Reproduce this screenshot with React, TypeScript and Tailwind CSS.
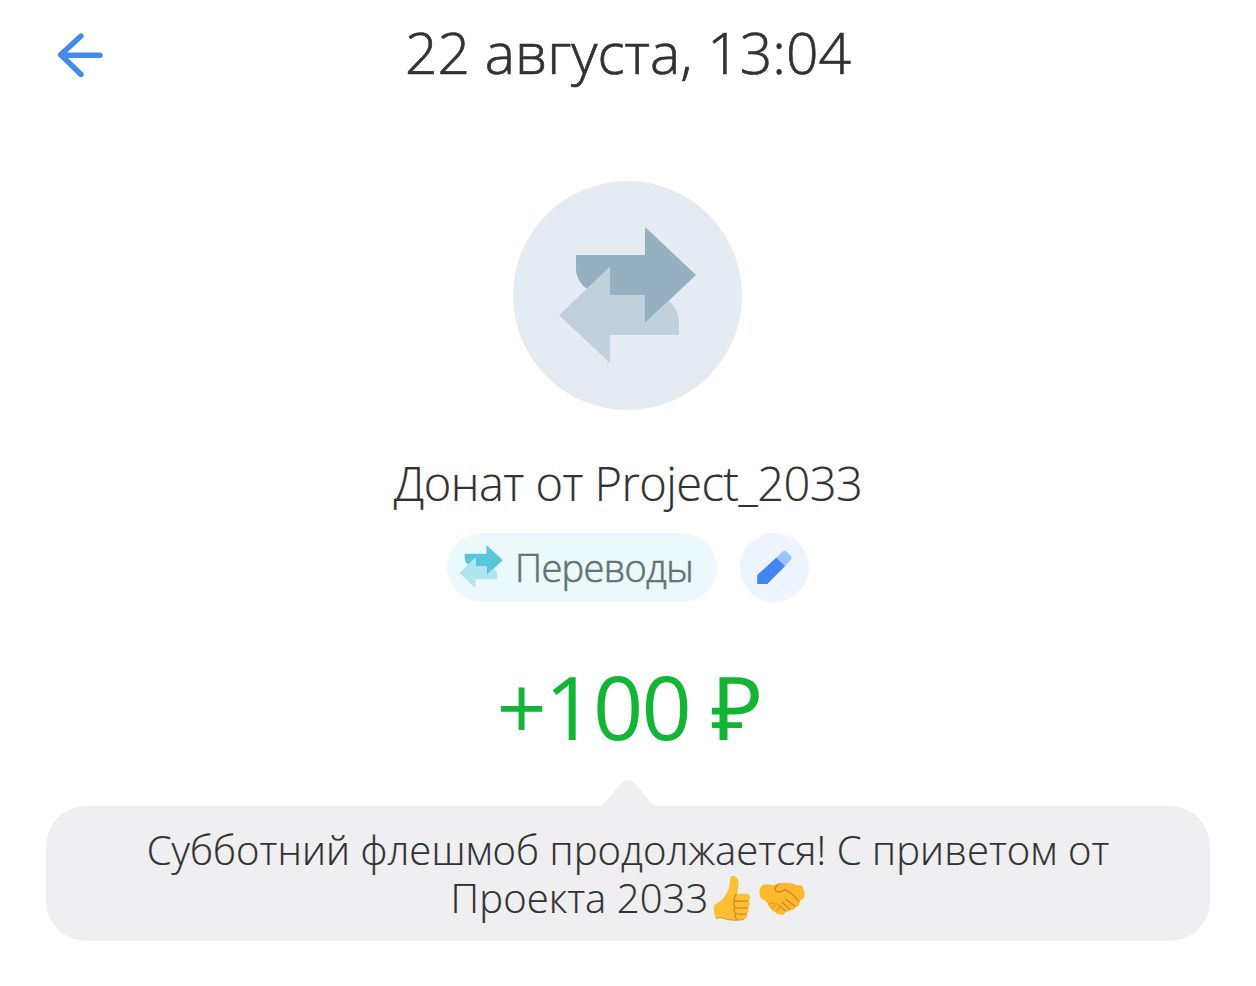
import React from "react";

interface IconProps {
  className?: string;
}

interface TransferIconProps extends IconProps {
  front: string;
  back: string;
}

const BackIcon: React.FC<IconProps> = (props) => (
  <svg viewBox="0 0 46 44" fill="none" className={props.className}>
    <path
      d="M24 3 3.7 21.7 24 41.5M4 22.2H43"
      stroke="#448aee"
      strokeWidth="5.4"
      strokeLinecap="round"
      strokeLinejoin="round"
    />
  </svg>
);

const TransferIcon: React.FC<TransferIconProps> = (props) => (
  <svg viewBox="0 0 137 136" className={props.className}>
    <path
      d="M17 28H86V0L137 48 86 96V68H51V40L28.3 62C21 57 17 50 17 41Z"
      fill={props.front}
    />
    <path
      d="M0 88.3 51 39.5V68H86V96L110 74C117 80 120 88 120 95V108H51V136Z"
      fill={props.back}
    />
  </svg>
);

const PencilIcon: React.FC<IconProps> = (props) => (
  <svg viewBox="0 0 36 35" className={props.className}>
    <path d="M.2 25.1 19.5 7.4 28.2 15.9 10.3 34H.2Z" fill="#4285f6" />
    <path
      d="M19.5 7.4 25.9 1.3Q27.5 0 29.1 1.3L34 6.2Q35.5 7.8 34 9.7L28.2 15.9Z"
      fill="#9cc2fa"
    />
  </svg>
);

const ThumbIcon: React.FC<IconProps> = (props) => (
  <svg viewBox="0 0 38 46" fill="none" className={props.className}>
    <path
      d="M18.5 1.3C21.2-.2 25.2 2.5 25.5 7.2c.2 4-.9 7.6-1.5 11.6h9.7c4.2.2 4.6 5.4 1.4 6.9 2.8 1.8 2.2 5.6-.4 6.8 2 2 1.3 5.3-1.2 6.4 1.3 2.3-.1 5.3-3.1 5.7-6.5.9-15.3.8-20.4-1.5-2.7-1.2-4.5-.8-7 .4C.4 38.500.2 32 1.4 29.7c3.6-1.600 8.2-4.300 11-9.4 3.4-5.2 4.5-9.4 4.700-14.500.1-2.200.2-3.700 1.400-4.500Z"
      fill="#fdbf33"
    />
    <path
      d="M23 19c-.5 2.7-2.600 4-1.900 6.500M35 25.700c-4 .9-8.300.9-12.800.2-2.400 1.700-2.200 5 .2 6.400-2.100 1.700-1.700 4.800.5 6-1.300 2-.7 4.400 1 5.700M34.700 32.500c-4 .9-8 .9-12.300-.2M33.500 38.900c-3.600.7-7 .6-10.600-.6"
      stroke="#df8620"
      strokeWidth="1.3"
      strokeLinecap="round"
    />
    <path
      d="M3.500 43.500c2.500-1.200 4.300-1.600 7-.4 5.100 2.300 13.500 2.400 20 1.300"
      stroke="#e79a25"
      strokeWidth="1.2"
      strokeLinecap="round"
    />
  </svg>
);

const HandshakeIcon: React.FC<IconProps> = (props) => (
  <svg viewBox="0 0 46 34" fill="none" className={props.className}>
    <path
      d="M8.6 2.2C12 4 15.5 3.4 19 2.2 23-.2 32 .4 37 3.1L42.5 3.6C45.6 7.6 46.5 13 44.8 16.3L40 19.4C41.3 22.5 39.5 25 36.5 24.5 36.3 27.6 33.5 28.8 31 27.5 30.4 29.6 28.4 30.1 26.5 29 26 32.4 23.5 34 20.9 32.1 18.3 32.8 17 31.5 16.7 29.7 14.3 30.1 12.5 28.5 12.6 26.7 10.5 26.3 9.6 24.3 9.7 22.5L6 18.6 1.4 15.7C-.3 11 .4 5.5 3.4 3.1Z"
      fill="#fcb92d"
    />
    <path
      d="M20 1.8C17 3.6 15.7 6.5 16.6 8.7 19 11.3 23.5 9.2 26 7.6 31 9.7 36 14.5 40 19.4M26.8 17.3 36.5 24.5M23.5 20.5 31 27.5M20 23.8 26.5 29"
      stroke="#dc831f"
      strokeWidth="1.3"
      strokeLinecap="round"
    />
    <path
      d="M20 23.8C19.5 21.2 17 21.2 15.8 22.9L12.6 26.7M24 27.3C23 25.3 21 25.3 19.8 26.8L16.7 29.7M15.7 22.7C15 19.8 12.5 20 9.7 22.5"
      stroke="#e89a28"
      strokeWidth="1.1"
      strokeLinecap="round"
    />
  </svg>
);

const App: React.FC = () => {
  return (
    <div className="w-full h-[986px] bg-white flex flex-col items-center font-['Open_Sans',sans-serif] font-light text-[#323232] overflow-hidden whitespace-nowrap">
      <header className="w-full h-[110px] grid grid-cols-[120px_1fr_120px] items-center">
        <button className="ml-[57px]">
          <BackIcon className="w-[46px] h-[44px]" />
        </button>
        <h1 className="text-center text-[57px] leading-[104px] h-[110px] [-webkit-text-stroke:0.7px]">
          22 августа, 13:04
        </h1>
      </header>

      <div className="mt-[71px] mr-px size-[229px] shrink-0 rounded-full bg-[#e5ebf3] flex items-center justify-center">
        <TransferIcon
          front="#95b0c0"
          back="#c1d1dc"
          className="w-[137px] h-[136px] mb-px"
        />
      </div>

      <h2 className="mt-[41px] text-[47px] leading-[64px] tracking-[-0.55px] [-webkit-text-stroke:0.2px]">
        Донат от Project_2033
      </h2>

      <div className="mt-[18px] flex flex-row gap-[23px]">
        <div className="w-[270px] h-[69px] rounded-full bg-[#ebf9fb] flex items-center pl-3 gap-3">
          <TransferIcon
            front="#5bc5dd"
            back="#aee6ef"
            className="w-[44px] h-[43px] -mt-0.5"
          />
          <span className="text-[38px] leading-[69px] tracking-[-0.7px] text-[#667272] [-webkit-text-stroke:0.6px]">
            Переводы
          </span>
        </div>
        <button className="size-[69px] rounded-full bg-[#edf4fe] flex items-center justify-center">
          <PencilIcon className="w-[36px] h-[35px]" />
        </button>
      </div>

      <div className="mt-[44px] text-[88px] leading-[120px] font-normal tracking-[-2px] text-[#12b536]">
        +100 ₽
      </div>

      <div className="mt-[14px] w-[1164px] flex flex-col items-center">
        <svg viewBox="0 0 60 26" className="w-[60px] h-[26px] fill-[#efeff1]">
          <path d="M0 26C5 25.5 7 23 10 19L22 4.5Q30-3.500 38 4.500L50 19C53 23 55 25.500 60 26Z" />
        </svg>
        <div className="w-full h-[135px] rounded-[40px] bg-[#efeff1] pt-5 text-center text-[40px] leading-[47px] tracking-[0.07px] [-webkit-text-stroke:0.2px]">
          <p>Субботний флешмоб продолжается! С приветом от</p>
          <p className="flex justify-center items-center">
            <span>Проекта 2033</span>
            <ThumbIcon className="ml-[5px] mt-0.5 w-[38px] h-[46px]" />
            <HandshakeIcon className="ml-2 mt-1 w-[46px] h-[34px]" />
          </p>
        </div>
      </div>
    </div>
  );
};

export default App;
